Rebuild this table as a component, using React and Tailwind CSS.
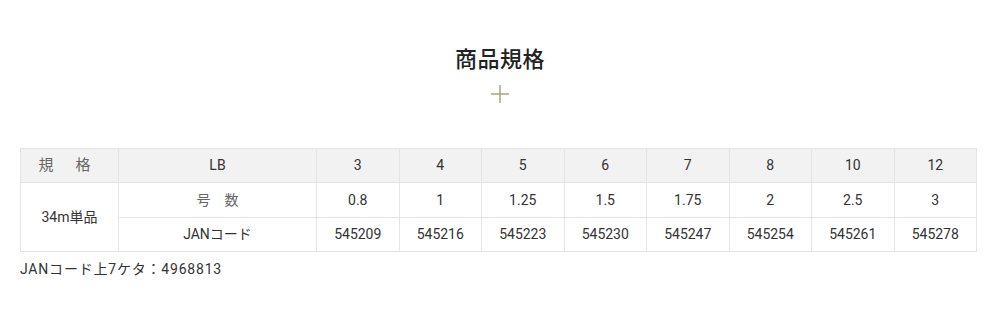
import React from 'react';

const sizes = [
  { lb: '3', go: '0.8', jan: '545209' },
  { lb: '4', go: '1', jan: '545216' },
  { lb: '5', go: '1.25', jan: '545223' },
  { lb: '6', go: '1.5', jan: '545230' },
  { lb: '7', go: '1.75', jan: '545247' },
  { lb: '8', go: '2', jan: '545254' },
  { lb: '10', go: '2.5', jan: '545261' },
  { lb: '12', go: '3', jan: '545278' },
];

const font = { fontFamily: 'Roboto, "Noto Sans CJK JP", sans-serif' };

export default function App() {
  const cell = 'border border-[#e4e4e4] text-center align-middle font-normal';
  return (
    <div className="w-[1000px] h-[322px] bg-white text-[#333]" style={font}>
      <div className="pt-[44px] flex flex-col items-center">
        <h2 className="text-[22px] leading-[32px] font-medium text-[#222] tracking-[0.5px]">商品規格</h2>
        <svg className="mt-[9px]" width="18" height="18" viewBox="0 0 18 18">
          <path d="M9 0v18M0 9h18" stroke="#aaa582" strokeWidth="1.5" fill="none" />
        </svg>
      </div>

      <div className="ml-[20px] w-[957px] mt-[45px]">
        <table className="w-full table-fixed border-collapse text-[14px]">
          <colgroup>
            <col className="w-[98px]" />
            <col className="w-[198px]" />
            {sizes.map((s) => <col key={s.lb} />)}
          </colgroup>
          <thead>
            <tr className="h-[34px] bg-[#f2f2f2]">
              <th className={`${cell} text-[#666] text-[15px] tracking-[22px] pl-[12px]`}>規格</th>
              <th className={cell}>LB</th>
              {sizes.map((s) => (
                <th key={s.lb} className={cell}>{s.lb}</th>
              ))}
            </tr>
          </thead>
          <tbody>
            <tr className="h-[35px]">
              <td rowSpan={2} className={cell}>34m単品</td>
              <td className={`${cell} text-[#666] tracking-[14px] pl-[14px]`}>号数</td>
              {sizes.map((s) => (
                <td key={s.lb} className={cell}>{s.go}</td>
              ))}
            </tr>
            <tr className="h-[34px]">
              <td className={cell}>JANコード</td>
              {sizes.map((s) => (
                <td key={s.lb} className={cell}>{s.jan}</td>
              ))}
            </tr>
          </tbody>
        </table>
        <p className="mt-[7px] text-[14px] leading-[20px] tracking-[0.8px]">JANコード上7ケタ：4968813</p>
      </div>
    </div>
  );
}
